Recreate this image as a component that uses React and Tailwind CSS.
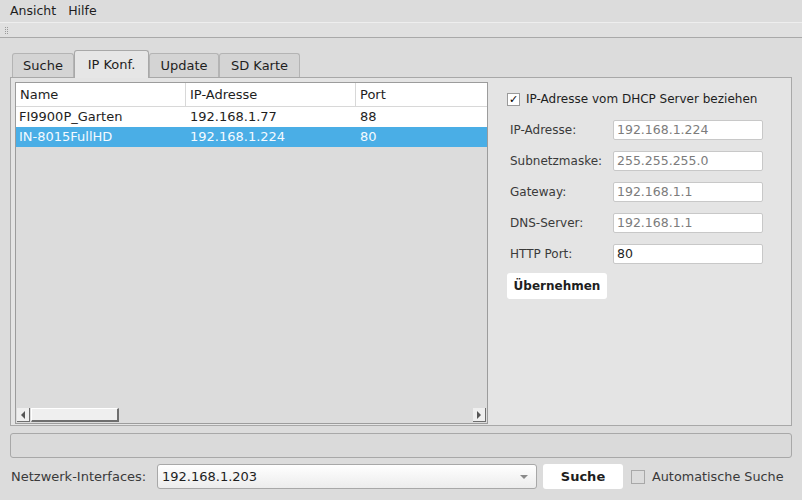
import React from "react";

const fields = [
  { label: "IP-Adresse:", value: "192.168.1.224", disabled: true },
  { label: "Subnetzmaske:", value: "255.255.255.0", disabled: true },
  { label: "Gateway:", value: "192.168.1.1", disabled: true },
  { label: "DNS-Server:", value: "192.168.1.1", disabled: true },
  { label: "HTTP Port:", value: "80", disabled: false },
];

const cams = [
  { name: "FI9900P_Garten", ip: "192.168.1.77", port: "88" },
  { name: "IN-8015FullHD", ip: "192.168.1.224", port: "80", selected: true },
];

function Tab({ label, active, w }) {
  if (active) {
    return (
      <div
        className={`${w} h-[28px] -mb-px border border-b-0 border-[#a8a8a8] rounded-t-[3px] bg-[#e6e6e6] flex items-center justify-center relative z-10`}
      >
        {label}
      </div>
    );
  }
  return (
    <div
      className={`${w} h-[24px] border border-b-0 border-[#b4b4b4] rounded-t-[3px] bg-[#d4d4d4] flex items-center justify-center`}
    >
      {label}
    </div>
  );
}

export default function App() {
  return (
    <div className="w-[802px] h-[500px] bg-[#dcdcdc] font-['DejaVu_Sans',sans-serif] text-[13px] text-[#1e1e1e] flex flex-col overflow-hidden">
      {/* Menüleiste */}
      <div className="h-[22px] flex items-center gap-[12px] pl-[10px] text-[12.5px]">
        <span>Ansicht</span>
        <span>Hilfe</span>
      </div>
      {/* Werkzeugleiste */}
      <div className="h-[16px] bg-[#e0e0e0] border-t border-[#eeeeee] border-b border-b-[#a9a9a9] flex items-center pl-[5px]">
        <div className="grid grid-cols-2 gap-[1px]">
          {Array.from({ length: 8 }).map((_, i) => (
            <div key={i} className="w-[1px] h-[1px] bg-[#9a9a9a]" />
          ))}
        </div>
      </div>

      {/* Tabs */}
      <div className="mt-[11px] px-[10px]">
        <div className="flex items-end pl-[2px] h-[28px]">
          <Tab label="Suche" w="w-[62px]" />
          <Tab label="IP Konf." active w="w-[75px]" />
          <Tab label="Update" w="w-[70px]" />
          <Tab label="SD Karte" w="w-[81px]" />
        </div>
        <div className="h-[349px] border border-[#a8a8a8] bg-[#e4e4e4] flex pl-[4px] pt-[4px] pb-[1px]">
          {/* Tabelle */}
          <div className="w-[473px] border border-[#9c9c9c] bg-[#dcdcdc] flex flex-col">
            <div className="flex h-[24px] bg-white border-b border-[#d8d8d8]">
              <div className="w-[170px] pl-[4px] flex items-center border-r border-[#d8d8d8]">Name</div>
              <div className="w-[170px] pl-[4px] flex items-center border-r border-[#d8d8d8]">IP-Adresse</div>
              <div className="flex-1 pl-[4px] flex items-center">Port</div>
            </div>
            {cams.map((c) => (
              <div
                key={c.name}
                className={`flex h-[20px] items-center ${c.selected ? "bg-[#4aaee6] text-[#f4faff]" : "bg-white"}`}
              >
                <div className="w-[170px] pl-[3px]">{c.name}</div>
                <div className="w-[170px] pl-[4px]">{c.ip}</div>
                <div className="flex-1 pl-[4px]">{c.port}</div>
              </div>
            ))}
            <div className="flex-1" />
            {/* Scrollbar */}
            <div className="h-[14px] mb-[1px] mx-[1px] flex">
              <div className="w-[13px] bg-[#efefef] border-r border-b border-[#6e6e6e] flex items-center justify-center">
                <div className="w-0 h-0 border-y-[4px] border-y-transparent border-r-[4px] border-r-[#555]" />
              </div>
              <div className="w-[88px] ml-[1px] bg-[#efefef] border-t border-l border-white border-r-2 border-b-2 border-r-[#6e6e6e] border-b-[#6e6e6e]" />
              <div className="flex-1" />
              <div className="w-[13px] bg-[#efefef] border-r border-b border-[#6e6e6e] flex items-center justify-center">
                <div className="w-0 h-0 border-y-[4px] border-y-transparent border-l-[4px] border-l-[#555]" />
              </div>
            </div>
          </div>

          {/* Formular */}
          <div className="flex-1 pl-[19px] pt-[8px] text-[12px] text-[#3a3a3a]">
            <div className="flex items-center gap-[6px] h-[18px]">
              <div className="w-[13px] h-[13px] bg-white border border-[#9a9a9a] flex items-center justify-center text-[11px] font-bold text-black leading-none">
                ✓
              </div>
              <span className="text-[#1e1e1e]">IP-Adresse vom DHCP Server beziehen</span>
            </div>
            <div className="mt-[12px] flex flex-col gap-[11px]">
              {fields.map((f) => (
                <div key={f.label} className="flex items-center h-[20px]">
                  <div className="w-[106px] pl-[3px]">{f.label}</div>
                  <div
                    className={`w-[150px] h-[20px] bg-white border border-[#c8c8c8] rounded-[2px] flex items-center pl-[3px] text-[12.5px] ${f.disabled ? "text-[#7c7c7c]" : "text-[#1e1e1e]"}`}
                  >
                    {f.value}
                  </div>
                </div>
              ))}
            </div>
            <button className="mt-[9px] w-[100px] h-[26px] bg-white rounded-[3px] font-bold text-[#1e1e1e] flex items-center justify-center">
              Übernehmen
            </button>
          </div>
        </div>
      </div>

      {/* Fortschritt */}
      <div className="mx-[10px] mt-[7px] h-[25px] border border-[#a8a8a8] rounded-[3px] bg-[#dadada]" />

      {/* Untere Leiste */}
      <div className="mt-[6px] flex items-center h-[25px] pl-[11px] text-[#3a3a3a]">
        <span className="w-[146px]">Netzwerk-Interfaces:</span>
        <div className="w-[380px] h-[25px] border border-[#a8a8a8] rounded-[3px] bg-gradient-to-b from-white to-[#ececec] flex items-center pl-[4px] pr-[8px] text-[#1e1e1e]">
          <span className="flex-1">192.168.1.203</span>
          <div className="w-0 h-0 border-x-[4px] border-x-transparent border-t-[4px] border-t-[#8a8a8a]" />
        </div>
        <button className="ml-[6px] w-[80px] h-[25px] bg-white rounded-[3px] font-bold text-[#1e1e1e]">
          Suche
        </button>
        <div className="ml-[8px] w-[14px] h-[14px] border border-[#a8a8a8] bg-[#dcdcdc]" />
        <span className="ml-[7px] text-[12.8px]">Automatische Suche</span>
      </div>
    </div>
  );
}
